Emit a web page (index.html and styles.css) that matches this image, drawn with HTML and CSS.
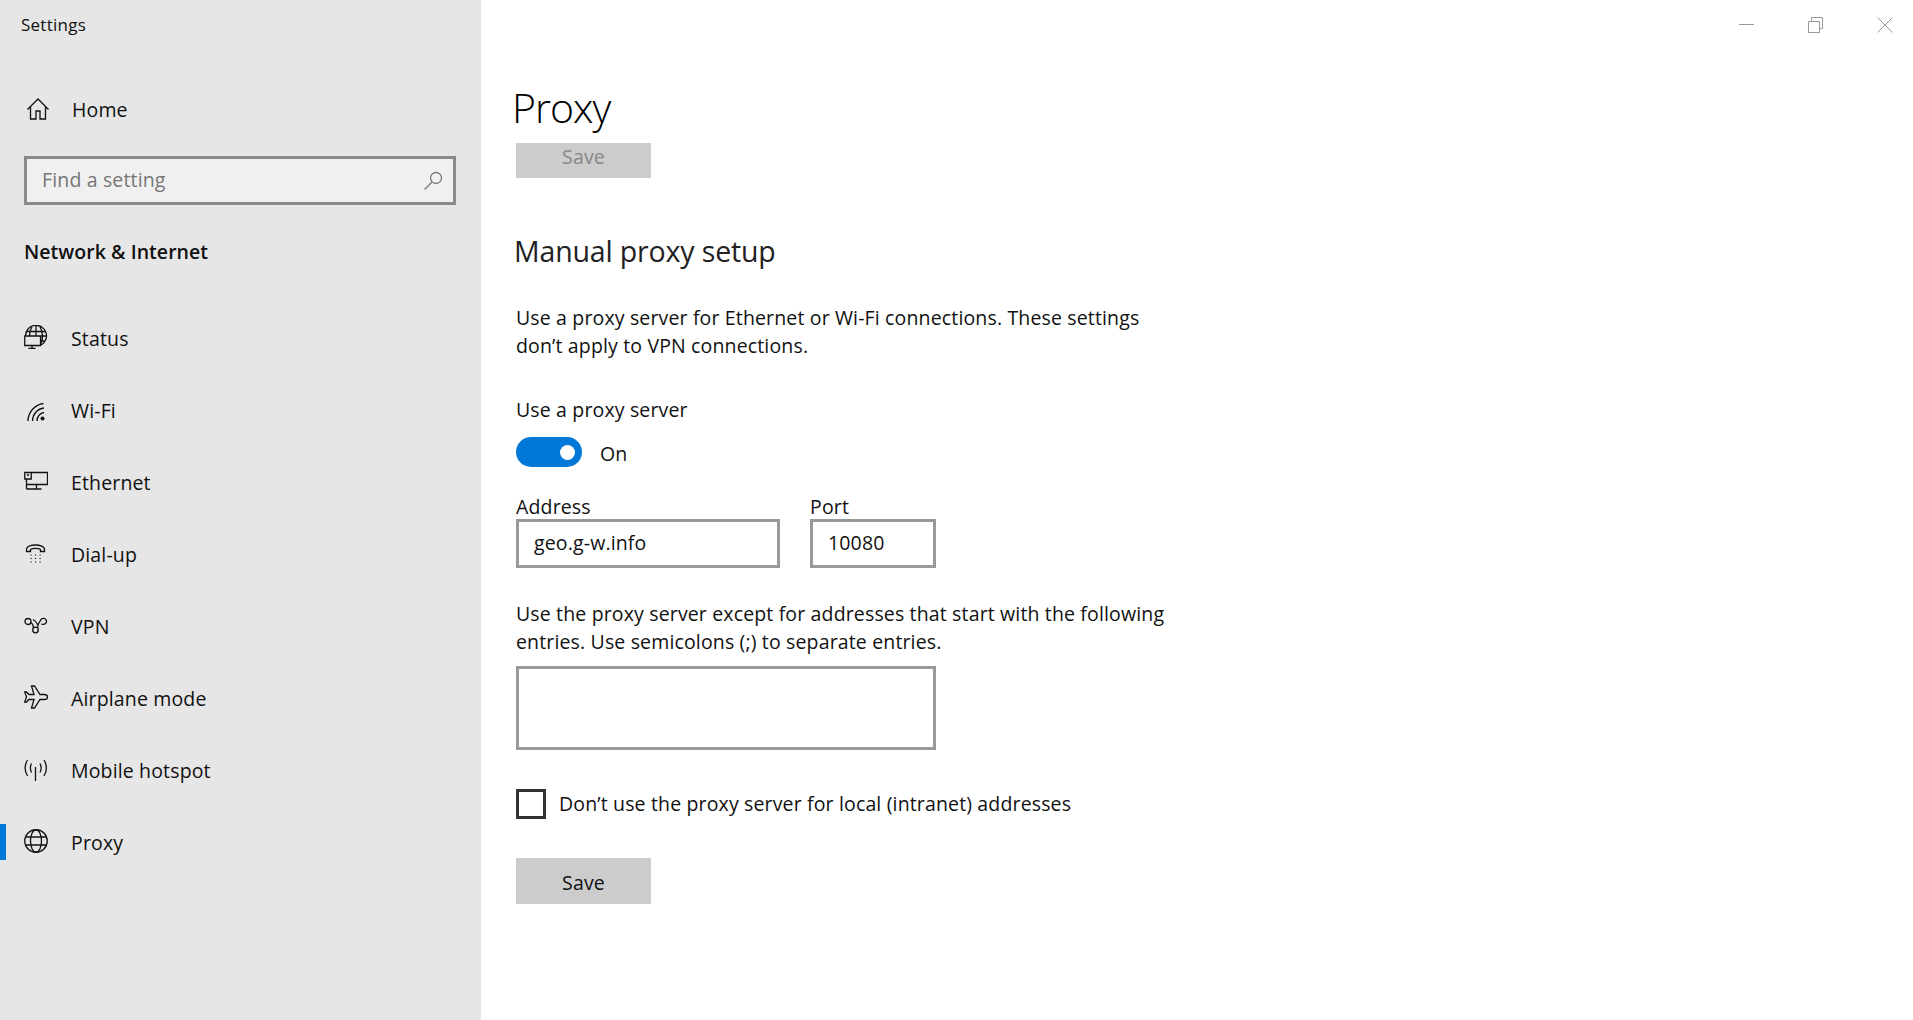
FILE: index.html
```html
<!DOCTYPE html>
<html lang="en">
<head>
<meta charset="utf-8">
<title>Settings</title>
<link rel="stylesheet" href="styles.css">
</head>
<body>
<div class="app">
  <aside class="sidebar">
    <div class="app-title">Settings</div>
    <a class="home">
      <svg class="icon" viewBox="0 0 24 24"><path d="M1.5 11.500 12 1l10.500 10.500M4.500 8.500V21h5.500v-8h4v8h5.500V8.500"/></svg>
      <span>Home</span>
    </a>
    <div class="search">
      <span class="search-text">Find a setting</span>
      <svg class="search-icon" viewBox="0 0 20 20"><circle cx="13" cy="7" r="5.500"/><path d="M9 11 1.500 18.500"/></svg>
    </div>
    <div class="section-title">Network &amp; Internet</div>
    <nav class="nav">
      <a class="nav-item">
        <svg class="icon" viewBox="0 0 24 24"><path d="M1.500 11A10.500 10.500 0 1 1 16 20.500M3 6.500h18M8 2C6 5 5.500 8 5.500 11M16 2c2 3 2.500 6 2.500 9 0 3-.5 6-2 8M12 .5V11M16.500 11h6M16.500 16H21M.75 11H16.500v9.500H.75zM8 20.500v3M4.500 23.500h7"/></svg>
        <span>Status</span>
      </a>
      <a class="nav-item">
        <svg class="icon" viewBox="0 0 24 24"><path d="M4 24C4 15 11 7.500 19.500 6.500M8.500 24c0-6.500 5-12.500 11.500-13M13 24c0-4.500 3-8 7-8.500"/><circle class="dot" cx="18.500" cy="21.500" r="2"/></svg>
        <span>Wi-Fi</span>
      </a>
      <a class="nav-item">
        <svg class="icon" viewBox="0 0 24 24"><path d="M7.250 3.500H23.500v12H2.500M2.500 10v10M.75 3.500h6.500V10H.75zM2.500 20h15M12.500 15.500V20M3 6h2"/></svg>
        <span>Ethernet</span>
      </a>
      <a class="nav-item">
        <svg class="icon" viewBox="0 0 24 24"><path d="M2.500 10.500V8.500C2.500 2.500 20.500 2.500 20.500 8.500v2h-4v-2c-2-1.500-8-1.500-10 0v2z"/><path class="dots" d="M6.500 14h1.200m3.300 0h1.200m3.300 0h1.200M6.500 17.500h1.200m3.300 0h1.200m3.300 0h1.200M6.500 21h1.200m3.300 0h1.200m3.300 0h1.200"/></svg>
        <span>Dial-up</span>
      </a>
      <a class="nav-item">
        <svg class="icon" viewBox="0 0 24 24"><circle cx="4" cy="8.500" r="3"/><circle cx="11.500" cy="17" r="2.800"/><path d="M6.800 9.500c1.500.8 2.500 2.800 2.700 5.500M13.500 15c.2-3 1.500-6 3-7.500.5-2 2.500-2.500 4-2s2.500 2.500 1.800 4-3 2.500-5 1.500M9 6.500c2 1 4 3 4.800 5.500"/></svg>
        <span>VPN</span>
      </a>
      <a class="nav-item">
        <svg class="icon" viewBox="0 0 24 24"><path d="M23.500 12c0-1.500-1.500-2.500-3-2.500H16L10.500 1H7.500l2.500 8.500H5L2.500 7H.75L2.500 12 .75 17H2.500L5 14.500h5L7.500 23h3L16 14.500h4.500c1.500 0 3-1 3-2.500z"/></svg>
        <span>Airplane mode</span>
      </a>
      <a class="nav-item">
        <svg class="icon" viewBox="0 0 24 24"><path d="M11.500 10v14M3.500 3C.5 8 .5 14 3.500 19M20 3c3 5 3 11 0 16M7.500 6.500c-1.500 3-1.500 6 0 9M16 6.500c1.500 3 1.500 6 0 9"/></svg>
        <span>Mobile hotspot</span>
      </a>
      <a class="nav-item active">
        <svg class="icon" viewBox="0 0 24 24"><circle cx="12" cy="12" r="11.250"/><ellipse cx="12" cy="12" rx="5.500" ry="11.250"/><path d="M2 8h20M2 16h20"/></svg>
        <span>Proxy</span>
      </a>
    </nav>
  </aside>
  <main class="main">
    <div class="window-controls">
      <svg class="win-icon" viewBox="0 0 16 16"><path d="M0 7.500h15"/></svg>
      <svg class="win-icon" viewBox="0 0 16 16"><path d="M.5 4.500h11v11H.5zM3.500 4.500V.5h11v11h-3"/></svg>
      <svg class="win-icon" viewBox="0 0 16 16"><path d="M.5.500l15 15M15.500.5l-15 15"/></svg>
    </div>
    <h1 class="page-title">Proxy</h1>
    <button class="btn btn-top" type="button" disabled>Save</button>
    <h2 class="subtitle">Manual proxy setup</h2>
    <p class="para para-first">Use a proxy server for Ethernet or Wi-Fi connections. These settings<br>don’t apply to VPN connections.</p>
    <div class="label-line">Use a proxy server</div>
    <div class="toggle-row">
      <span class="toggle"><span class="knob"></span></span>
      <span class="toggle-text">On</span>
    </div>
    <div class="fields">
      <label class="field">
        <span class="field-label">Address</span>
        <input class="input input-address" type="text" value="geo.g-w.info">
      </label>
      <label class="field">
        <span class="field-label">Port</span>
        <input class="input input-port" type="text" value="10080">
      </label>
    </div>
    <p class="para para-second">Use the proxy server except for addresses that start with the following<br>entries. Use semicolons (;) to separate entries.</p>
    <textarea class="area"></textarea>
    <label class="check-row">
      <input class="check" type="checkbox">
      <span class="check-text">Don’t use the proxy server for local (intranet) addresses</span>
    </label>
    <button class="btn btn-bottom" type="button">Save</button>
  </main>
</div>
</body>
</html>
```
FILE: styles.css
```css
* { box-sizing: border-box; }
html, body { margin: 0; height: 100%; }
body {
  font-family: "Open Sans", "Noto Sans", "Liberation Sans", sans-serif;
  font-size: 19.500px;
  letter-spacing: 0.150px;
  color: #111;
  background: #fff;
  overflow: hidden;
}
.app { display: flex; height: 1020px; }

.sidebar { width: 481px; flex: none; background: #e6e6e6; display: flex; flex-direction: column; }
.app-title { height: 50px; padding-left: 21px; line-height: 49px; font-size: 17px; letter-spacing: 0.250px; }
.icon { width: 24px; height: 24px; flex: none; fill: none; stroke: #111; stroke-width: 1.300; }
.icon .dot { fill: #111; stroke: none; }
.icon .dots { stroke-width: 1.200; }
.home { margin-top: 40px; height: 40px; padding-left: 26px; display: flex; align-items: center; gap: 22px; }
.home span { padding-bottom: 2px; }
.search {
  margin: 26px 25px 0 24px; height: 49px; border: 3px solid #8a8a8a; background: #f0f0f0;
  display: flex; align-items: center; justify-content: space-between; padding: 0 10px 0 15px;
}
.search-text { color: #767676; padding-bottom: 2px; }
.search-icon { width: 20px; height: 20px; fill: none; stroke: #767676; stroke-width: 1.300; }
.section-title { margin-top: 28px; height: 36px; line-height: 38px; padding-left: 24px; font-weight: 600; letter-spacing: 0.050px; color: #111; }
.nav { margin-top: 33px; display: flex; flex-direction: column; }
.nav-item { position: relative; height: 72px; padding-left: 24px; display: flex; align-items: center; gap: 23px; }
.nav-item span { padding-top: 1px; }
.nav-item .icon { margin-top: -2px; }
.nav-item.active::before { content: ""; position: absolute; left: 0; top: 18px; width: 6px; height: 36px; background: #0078d7; }

.main { flex: 1; padding-left: 35px; display: flex; flex-direction: column; align-items: flex-start; }
.window-controls { align-self: stretch; height: 50px; display: flex; justify-content: flex-end; align-items: flex-start; padding: 17px 20px 0 0; gap: 53px; }
.win-icon { width: 16px; height: 16px; fill: none; stroke: #999; stroke-width: 1; }
.page-title { margin: 30px 0 0 -4px; height: 56px; line-height: 54px; font-size: 41px; font-weight: 300; letter-spacing: -1px; color: #000; }
.btn { display: block; width: 135px; border: 0; background: #ccc; font: inherit; letter-spacing: inherit; color: #111; padding: 0; }
.btn-top { margin-top: 7px; height: 35px; color: #878787; padding-bottom: 9px; }
.subtitle { margin: 55px 0 0 -2px; height: 40px; line-height: 36px; font-size: 28.500px; font-weight: 400; letter-spacing: -0.150px; color: #222; }
.para { margin: 0; line-height: 28px; white-space: nowrap; }
.para-first { margin-top: 31px; }
.label-line { margin-top: 36px; height: 28px; line-height: 28px; }
.toggle-row { margin-top: 13px; height: 30px; display: flex; align-items: center; gap: 18px; }
.toggle { width: 66px; height: 30px; border-radius: 15px; background: #0078d7; display: flex; align-items: center; justify-content: flex-end; padding-right: 7px; }
.knob { width: 15px; height: 15px; border-radius: 50%; background: #fff; }
.toggle-text { padding-top: 3px; }
.fields { margin-top: 28px; display: flex; gap: 30px; }
.field { display: flex; flex-direction: column; }
.field-label { height: 24px; line-height: 24px; }
.input { height: 49px; border: 3px solid #999; background: #fff; font: inherit; letter-spacing: inherit; color: #111; padding: 0 15px 2px; outline: 0; border-radius: 0; }
.input-address { width: 264px; }
.input-port { width: 126px; }
.para-second { margin-top: 32px; }
.area { display: block; margin-top: 10px; width: 420px; height: 84px; border: 3px solid #999; background: #fff; resize: none; outline: 0; border-radius: 0; }
.check-row { margin-top: 39px; height: 30px; display: flex; align-items: center; gap: 13px; }
.check-text { padding-bottom: 1px; }
.check { appearance: none; margin: 0; width: 30px; height: 30px; border: 3px solid #333; background: #fff; border-radius: 0; }
.btn-bottom { margin-top: 39px; height: 46px; padding-top: 2px; }
```
